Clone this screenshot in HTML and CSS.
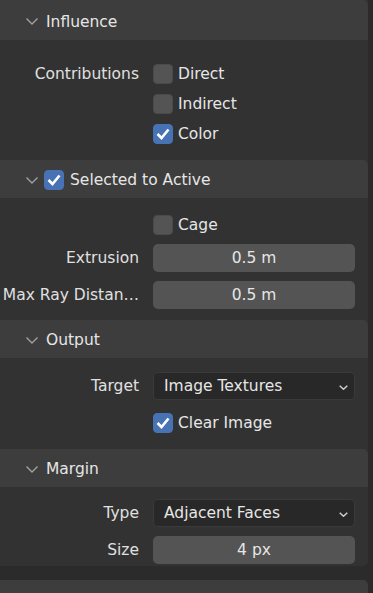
FILE: index.html
```html
<!DOCTYPE html>
<html lang="en">
<head>
    <meta charset="UTF-8">
    <meta name="viewport" content="width=device-width, initial-scale=1.0">
    <title>Bake Settings</title>
    <link rel="stylesheet" href="styles.css">
</head>
<body>
    <div class="region">
        <div class="panel">
            <!-- Influence -->
            <div class="sub-header">
                <svg class="chevron" width="12" height="7" viewBox="0 0 12 7"><polyline points="0.5,0.5 6,6 11.5,0.5"/></svg>
                <span>Influence</span>
            </div>
            <div class="sub-body influence">
                <div class="row check-row">
                    <span class="label">Contributions</span>
                    <label class="check"><span class="box"></span>Direct</label>
                </div>
                <div class="row check-row">
                    <span class="label"></span>
                    <label class="check"><span class="box"></span>Indirect</label>
                </div>
                <div class="row check-row">
                    <span class="label"></span>
                    <label class="check"><span class="box on"><svg width="20" height="20" viewBox="0 0 20 20"><polyline points="4.5,10 8.5,14 15.5,5.5"/></svg></span>Color</label>
                </div>
            </div>

            <!-- Selected to Active -->
            <div class="sub-header">
                <svg class="chevron" width="12" height="7" viewBox="0 0 12 7"><polyline points="0.5,0.5 6,6 11.5,0.5"/></svg>
                <span class="box on head-box"><svg width="20" height="20" viewBox="0 0 20 20"><polyline points="4.5,10 8.5,14 15.5,5.5"/></svg></span>
                <span class="head-check-text">Selected to Active</span>
            </div>
            <div class="sub-body selected">
                <div class="row check-row">
                    <span class="label"></span>
                    <label class="check"><span class="box"></span>Cage</label>
                </div>
                <div class="row field-row first">
                    <span class="label">Extrusion</span>
                    <div class="num">0.5 m</div>
                </div>
                <div class="row field-row">
                    <span class="label">Max Ray Distan…</span>
                    <div class="num">0.5 m</div>
                </div>
            </div>

            <!-- Output -->
            <div class="sub-header">
                <svg class="chevron" width="12" height="7" viewBox="0 0 12 7"><polyline points="0.5,0.5 6,6 11.5,0.5"/></svg>
                <span>Output</span>
            </div>
            <div class="sub-body output">
                <div class="row field-row first">
                    <span class="label">Target</span>
                    <div class="menu">Image Textures
                        <svg width="9" height="5" viewBox="0 0 9 5"><polyline points="0.7,0.7 4.5,4.2 8.3,0.7"/></svg>
                    </div>
                </div>
                <div class="row check-row clear">
                    <span class="label"></span>
                    <label class="check"><span class="box on"><svg width="20" height="20" viewBox="0 0 20 20"><polyline points="4.5,10 8.5,14 15.5,5.5"/></svg></span>Clear Image</label>
                </div>
            </div>

            <!-- Margin -->
            <div class="sub-header">
                <svg class="chevron" width="12" height="7" viewBox="0 0 12 7"><polyline points="0.5,0.5 6,6 11.5,0.5"/></svg>
                <span>Margin</span>
            </div>
            <div class="sub-body margin last">
                <div class="row field-row first">
                    <span class="label">Type</span>
                    <div class="menu">Adjacent Faces
                        <svg width="9" height="5" viewBox="0 0 9 5"><polyline points="0.7,0.7 4.5,4.2 8.3,0.7"/></svg>
                    </div>
                </div>
                <div class="row field-row">
                    <span class="label">Size</span>
                    <div class="num">4 px</div>
                </div>
            </div>
        </div>

        <div class="panel next">
            <div class="top-header">
                <svg class="chevron" width="12" height="7" viewBox="0 0 12 7"><polyline points="0.5,0.5 6,6 11.5,0.5"/></svg>
            </div>
        </div>
    </div>
</body>
</html>
```

FILE: styles.css
```css
html, body {
    margin: 0;
    padding: 0;
    height: 593px;
    overflow: hidden;
}
body {
    font-family: "DejaVu Sans", sans-serif;
    font-size: 15.5px;
    line-height: 18px;
    background: #2b2b2b; /* region background */
    color: #e6e6e6;
}
.region {
    width: 368px;
}
.panel {
    background: #323232;
    border-radius: 0 0 5px 0;
}
.panel.next {
    margin-top: 14px;
    background: #3d3d3d;
    border-radius: 0 5px 0 0;
    height: 40px;
}
.sub-header {
    height: 38px;
    box-sizing: border-box;
    padding-top: 2px;
    background: #3d3d3d;
    display: flex;
    align-items: center;
    padding-left: 26px;
    border-radius: 0 5px 0 0;
    color: #e6e6e6;
}
.sub-header:first-child {
    height: 40px;
    padding-top: 3px;
}
.sub-header span {
    margin-left: 8px;
}
.top-header {
    height: 40px;
    display: flex;
    align-items: center;
    padding-left: 8px;
}
.chevron {
    flex: none;
}
.chevron polyline {
    fill: none;
    stroke: #a0a0a0;
    stroke-width: 1.4;
}
.sub-header .head-box {
    margin-left: 6px;
}
.sub-header .head-check-text {
    margin-left: 1px;
}

/* bodies */
.sub-body {
    padding-bottom: 11px;
}
.influence {
    padding-top: 19px;
}
.selected {
    padding-top: 12px;
}
.output {
    padding-top: 14px;
}
.margin {
    padding-top: 12px;
    padding-bottom: 2px;
}
.row {
    display: grid;
    grid-template-columns: 139px 202px;
    column-gap: 14px;
    align-items: center;
}
.check-row {
    height: 30px;
}
.field-row {
    height: 28px;
    margin-top: 9px;
}
.field-row.first {
    margin-top: 4px;
}
.output .field-row.first,
.margin .field-row.first {
    margin-top: 0;
}
.check-row.clear {
    margin-top: 8px;
}
.label {
    text-align: right;
    white-space: nowrap;
    color: #e0e0e0;
}

/* checkbox */
.check {
    display: flex;
    align-items: center;
    color: #e6e6e6;
}
.box {
    width: 20px;
    height: 20px;
    flex: none;
    box-sizing: border-box;
    background: #545454;
    border: 1px solid #4a4a4a;
    border-radius: 4px;
    margin-right: 5px;
    display: flex;
    align-items: center;
    justify-content: center;
}
.box.on {
    background: #4772b3;
    border-color: #4772b3;
}
.box svg {
    flex: none;
}
.box polyline {
    fill: none;
    stroke: #ffffff;
    stroke-width: 2.6;
}

/* number field */
.num {
    height: 28px;
    background: #545454;
    border-radius: 5px;
    display: flex;
    align-items: center;
    justify-content: center;
    color: #e6e6e6;
}

/* dropdown menu */
.menu {
    height: 28px;
    box-sizing: border-box;
    background: #282828;
    border: 1px solid #3a3a3a;
    border-radius: 5px;
    display: flex;
    align-items: center;
    padding-left: 10px;
    position: relative;
    color: #e6e6e6;
}
.menu svg {
    position: absolute;
    right: 6px;
    top: 12px;
}
.menu polyline {
    fill: none;
    stroke: #d0d0d0;
    stroke-width: 1.5;
}
```
